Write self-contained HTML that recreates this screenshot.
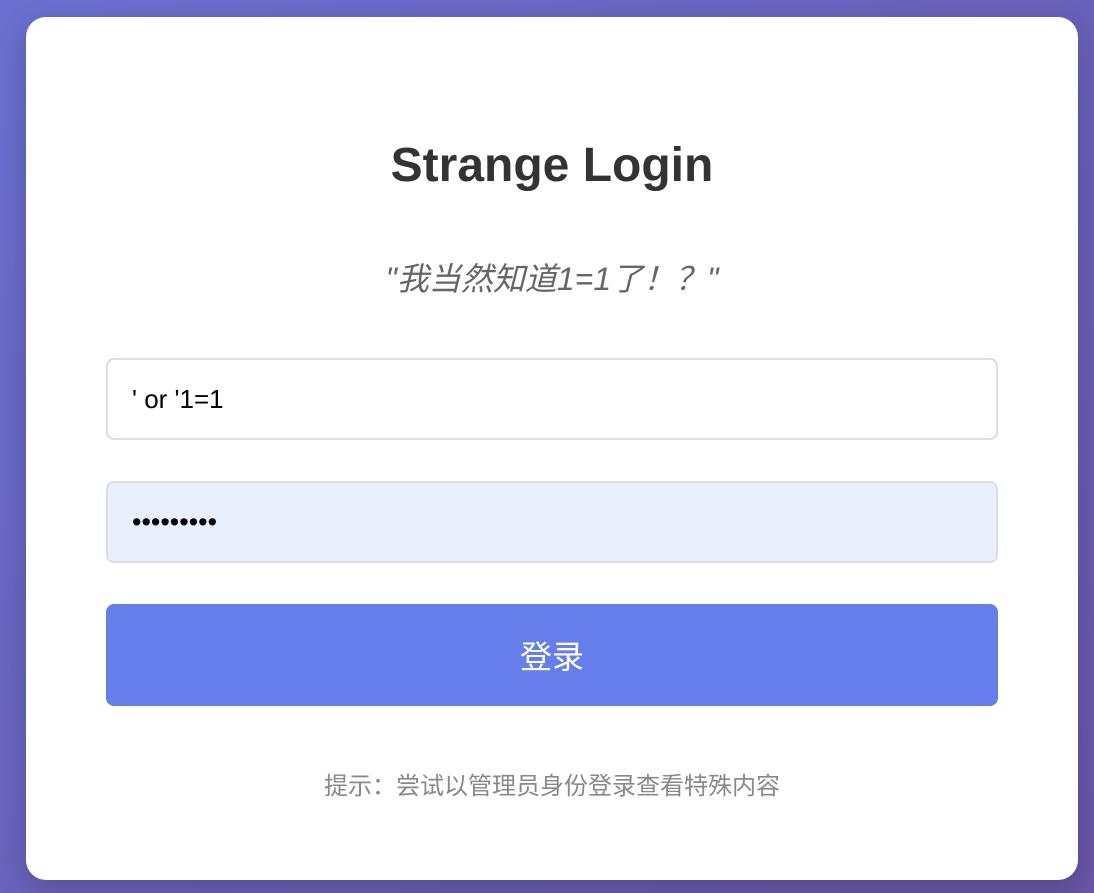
<!DOCTYPE html>
<html><head><meta charset="utf-8"><style>
html,body{margin:0;padding:0;width:1094px;height:893px;overflow:hidden;}
body{background:linear-gradient(135deg,#6a6fd0 0%,#6a56a8 100%);font-family:"Liberation Sans","Noto Sans CJK SC",sans-serif;position:relative;}
.card{position:absolute;left:26px;top:17px;width:1052px;height:863px;background:#fff;border-radius:20px;box-shadow:0 10px 30px rgba(0,0,0,.2);}
h1{position:absolute;left:0;right:0;top:121px;margin:0;text-align:center;font-size:48px;font-weight:bold;color:#333;}
.sub{position:absolute;left:0;right:0;top:237px;text-align:center;font-size:32px;font-style:italic;color:#666;}
.in{position:absolute;left:80px;width:888px;height:78px;border:2px solid #ddd;border-radius:8px;box-sizing:content-box;font-size:26px;color:#000;line-height:78px;padding:0;}
.in span{margin-left:24px;}
.i1{top:341px;background:#fff;}
.i2{top:464px;background:#e8f0fe;}
.btn{position:absolute;left:80px;top:587px;width:892px;height:102px;background:#667eea;border-radius:8px;color:#fff;font-size:32px;text-align:center;line-height:106px;}
.hint{position:absolute;left:0;right:0;top:749px;text-align:center;font-size:24px;color:#888;}
</style></head><body>
<div class="card">
<h1>Strange Login</h1>
<div class="sub">"我当然知道1=1了！？"</div>
<div class="in i1"><span>' or '1=1</span></div>
<div class="in i2"><span style="font-size:27px">•••••••••</span></div>
<div class="btn">登录</div>
<div class="hint">提示：尝试以管理员身份登录查看特殊内容</div>
</div>
</body></html>
